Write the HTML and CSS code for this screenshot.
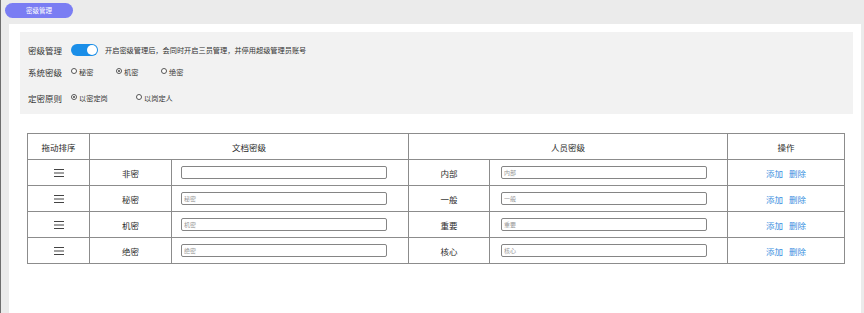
FILE: index.html
```html
<!DOCTYPE html>
<html lang="zh-CN">
<head>
<meta charset="utf-8">
<title>密级管理</title>
<link rel="stylesheet" href="styles.css">
</head>
<body>
<div class="app">
  <div class="tabbar">
    <span class="tab">密级管理</span>
  </div>
  <div class="main">
    <div class="settings">
      <div class="row row-first">
        <span class="label">密级管理</span>
        <span class="switch"><span class="knob"></span></span>
        <span class="hint">开启密级管理后，会同时开启三员管理，并停用超级管理员账号</span>
      </div>
      <div class="row row-second">
        <span class="label">系统密级</span>
        <span class="radio r45"><i class="dot"></i>秘密</span>
        <span class="radio r45"><i class="dot on"></i>机密</span>
        <span class="radio r45"><i class="dot"></i>绝密</span>
      </div>
      <div class="row row-third">
        <span class="label">定密原则</span>
        <span class="radio r65"><i class="dot on"></i>以密定岗</span>
        <span class="radio r65"><i class="dot"></i>以岗定人</span>
      </div>
    </div>

    <table class="grid">
      <colgroup>
        <col class="c1"><col class="c2"><col class="c3"><col class="c4"><col class="c5"><col class="c6">
      </colgroup>
      <thead>
        <tr>
          <th>拖动排序</th>
          <th colspan="2">文档密级</th>
          <th colspan="2">人员密级</th>
          <th>操作</th>
        </tr>
      </thead>
      <tbody>
        <tr>
          <td><svg class="drag" width="10" height="8" viewBox="0 0 10 8"><path d="M0 0.5H10M0 4H10M0 7.5H10" stroke="#444" stroke-width="1.1"/></svg></td>
          <td>非密</td>
          <td class="in-a"><input class="field" type="text"></td>
          <td>内部</td>
          <td class="in-b"><input class="field" type="text" placeholder="内部"></td>
          <td><a class="act">添加</a><a class="act">删除</a></td>
        </tr>
        <tr>
          <td><svg class="drag" width="10" height="8" viewBox="0 0 10 8"><path d="M0 0.5H10M0 4H10M0 7.5H10" stroke="#444" stroke-width="1.1"/></svg></td>
          <td>秘密</td>
          <td class="in-a"><input class="field" type="text" placeholder="秘密"></td>
          <td>一般</td>
          <td class="in-b"><input class="field" type="text" placeholder="一般"></td>
          <td><a class="act">添加</a><a class="act">删除</a></td>
        </tr>
        <tr>
          <td><svg class="drag" width="10" height="8" viewBox="0 0 10 8"><path d="M0 0.5H10M0 4H10M0 7.5H10" stroke="#444" stroke-width="1.1"/></svg></td>
          <td>机密</td>
          <td class="in-a"><input class="field" type="text" placeholder="机密"></td>
          <td>重要</td>
          <td class="in-b"><input class="field" type="text" placeholder="重要"></td>
          <td><a class="act">添加</a><a class="act">删除</a></td>
        </tr>
        <tr>
          <td><svg class="drag" width="10" height="8" viewBox="0 0 10 8"><path d="M0 0.5H10M0 4H10M0 7.5H10" stroke="#444" stroke-width="1.1"/></svg></td>
          <td>绝密</td>
          <td class="in-a"><input class="field" type="text" placeholder="绝密"></td>
          <td>核心</td>
          <td class="in-b"><input class="field" type="text" placeholder="核心"></td>
          <td><a class="act">添加</a><a class="act">删除</a></td>
        </tr>
      </tbody>
    </table>
  </div>
</div>
</body>
</html>
```

FILE: styles.css
```css
* { box-sizing: border-box; }
html, body {
  margin: 0;
  padding: 0;
  height: 100%;
  background: #ebebeb;
}
body {
  font-family: "Noto Sans CJK SC", "Noto Sans", "Liberation Sans", sans-serif;
  color: #333;
  overflow: hidden;
}
.app {
  height: 313px;
  border-left: 1px solid #6e6e6e;
  background: #ebebeb;
  display: flex;
  flex-direction: column;
  padding: 0 3px 0 1px;
}
.tabbar {
  height: 24px;
  padding: 3px 0 0 3px;
  flex: none;
}
.tab {
  display: flex;
  align-items: center;
  justify-content: center;
  width: 68px;
  height: 15px;
  border-radius: 8px;
  background: #7a7df3;
  color: #fff;
  font-size: 6.5px;
  line-height: 1;
}
.main {
  flex: 1;
  margin-left: 7px;
  background: #fff;
  padding: 8px 8px 0 11px;
}
.settings {
  background: #f2f2f2;
  height: 82px;
  padding: 10px 0 0 8px;
}
.row {
  display: flex;
  align-items: center;
  height: 16px;
}
.row-second { margin-top: 6px; }
.row-third { margin-top: 10px; }
.label {
  width: 43px;
  flex: none;
  font-size: 8.5px;
  color: #333;
}
.switch {
  width: 27px;
  height: 12px;
  border-radius: 6px;
  background: #1a8ee8;
  display: flex;
  align-items: center;
  justify-content: flex-end;
  padding-right: 1px;
  flex: none;
}
.knob {
  width: 10px;
  height: 10px;
  border-radius: 50%;
  background: #fff;
}
.hint {
  margin-left: 7px;
  font-size: 7.2px;
  color: #333;
  white-space: nowrap;
}
.radio {
  display: flex;
  align-items: center;
  font-size: 7.2px;
  color: #333;
  flex: none;
}
.r45 { width: 45px; }
.r65 { width: 65px; }
.dot {
  width: 6px;
  height: 6px;
  border: 1px solid #555;
  border-radius: 50%;
  margin-right: 2px;
  margin-top: -3px;
  display: flex;
  align-items: center;
  justify-content: center;
  background: #fff;
}
.dot.on::after {
  content: "";
  width: 2px;
  height: 2px;
  border-radius: 50%;
  background: #444;
}
.grid {
  margin: 19px 0 0 7px;
  width: 817px;
  border-collapse: collapse;
  table-layout: fixed;
}
.c1 { width: 62px; }
.c2 { width: 82px; }
.c3 { width: 237px; }
.c4 { width: 81px; }
.c5 { width: 238px; }
.c6 { width: 117px; }
.grid th,
.grid td {
  border: 1px solid #8c8c8c;
  height: 26px;
  padding: 0;
  text-align: center;
  font-size: 8.5px;
  font-weight: normal;
  color: #2b2b2b;
}
.grid td.in-a { text-align: left; padding-left: 9px; }
.grid td.in-b { text-align: left; padding-left: 11px; }
.drag { display: block; margin: 0 auto; }
.field {
  display: block;
  width: 206px;
  height: 13px;
  border: 1px solid #858585;
  border-radius: 2px;
  padding: 0 2px;
  font-family: inherit;
  font-size: 6px;
  color: #333;
  background: #fff;
  outline: none;
}
.field::placeholder { color: #999; }
.act {
  color: #3b8fe0;
  font-size: 8.5px;
  margin: 0 3px;
  cursor: pointer;
}
```
